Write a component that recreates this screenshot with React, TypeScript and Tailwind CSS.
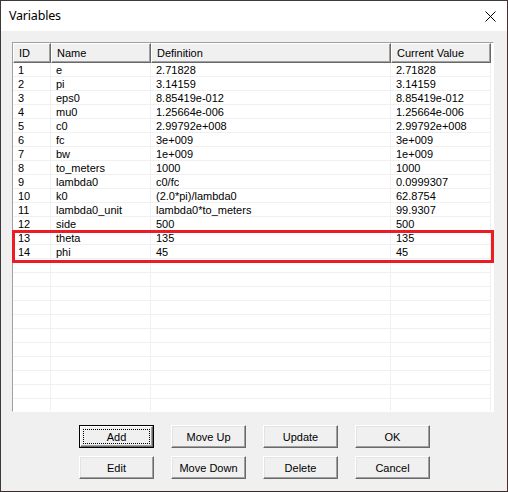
import React from "react";

type Row = [string, string, string, string];

const rows: Row[] = [
  ["1", "e", "2.71828", "2.71828"],
  ["2", "pi", "3.14159", "3.14159"],
  ["3", "eps0", "8.85419e-012", "8.85419e-012"],
  ["4", "mu0", "1.25664e-006", "1.25664e-006"],
  ["5", "c0", "2.99792e+008", "2.99792e+008"],
  ["6", "fc", "3e+009", "3e+009"],
  ["7", "bw", "1e+009", "1e+009"],
  ["8", "to_meters", "1000", "1000"],
  ["9", "lambda0", "c0/fc", "0.0999307"],
  ["10", "k0", "(2.0*pi)/lambda0", "62.8754"],
  ["11", "lambda0_unit", "lambda0*to_meters", "99.9307"],
  ["12", "side", "500", "500"],
  ["13", "theta", "135", "135"],
  ["14", "phi", "45", "45"],
];

const TOTAL_ROWS = 25;
const widths = ["w-[38px]", "w-[100px]", "w-[240px]", "w-[100px]"];
const headers = ["ID", "Name", "Definition", "Current Value"];

function HeaderCell({ label, w }: { label: string; w: string }) {
  return (
    <div
      className={`${w} h-[20px] shrink-0 flex items-center pl-[5px] pt-[1px] bg-[#f0f0f0] border-t border-l border-t-white border-l-white border-r border-b border-r-[#696969] border-b-[#696969] shadow-[inset_-1px_-1px_#a0a0a0]`}
    >
      {label}
    </div>
  );
}

function Btn({ label, isDefault }: { label: string; isDefault?: boolean }) {
  if (isDefault) {
    return (
      <div className="w-[75px] h-[23px] border border-black">
        <div className="w-full h-full flex items-center justify-center pt-[1px] bg-[#f0f0f0] border-t border-l border-t-white border-l-white border-r border-b border-r-[#696969] border-b-[#696969] shadow-[inset_-1px_-1px_#a0a0a0] relative">
          <div className="absolute inset-[2px] border border-dotted border-black" />
          {label}
        </div>
      </div>
    );
  }
  return (
    <div className="w-[75px] h-[23px] flex items-center justify-center pt-[1px] bg-[#f0f0f0] border-t border-l border-t-white border-l-white border-r border-b border-r-[#696969] border-b-[#696969] shadow-[inset_-1px_-1px_#a0a0a0,inset_1px_1px_#e3e3e3]">
      {label}
    </div>
  );
}

export default function App() {
  const allRows: Row[] = Array.from({ length: TOTAL_ROWS }, (_, i) => rows[i] ?? ["", "", "", ""]);

  return (
    <div className="w-[508px] h-[492px] relative flex flex-col bg-[#f0f0f0] border border-l-[#3a3a3a] border-t-[#3a3a3a] border-r-[#4f2b2b] border-b-[#3a2c2c] font-['Liberation_Sans',Arial,sans-serif] text-[11px] text-black overflow-hidden">
      {/* title bar */}
      <div className="h-[30px] shrink-0 bg-white flex items-center justify-between pl-[8px] pr-[11px]">
        <span className="text-[12.5px] font-['Noto_Sans',sans-serif] tracking-[-0.2px]">Variables</span>
        <svg width="11" height="11" viewBox="0 0 11 11">
          <path d="M0.5 0.5 L10.5 10.5 M10.5 0.5 L0.5 10.5" stroke="#000" strokeWidth="1" />
        </svg>
      </div>

      {/* list */}
      <div className="ml-[11px] mt-[11px] w-[482px] h-[370px] border border-t-[#a0a0a0] border-l-[#a0a0a0] border-r-white border-b-white bg-white overflow-hidden">
        <div className="flex">
          {headers.map((h, i) => (
            <HeaderCell key={h} label={h} w={widths[i]} />
          ))}
        </div>
        {allRows.map((r, ri) => (
          <div key={ri} className="flex h-[14px]">
            {r.map((c, ci) => (
              <div
                key={ci}
                className={`${widths[ci]} shrink-0 h-[14px] pl-[5px] pt-[1px] leading-[13px] border-r border-b border-[#f0f0f0] whitespace-nowrap overflow-hidden`}
              >
                {c}
              </div>
            ))}
          </div>
        ))}
      </div>

      {/* highlight */}
      <div className="absolute left-[11px] top-[229px] w-[482px] h-[33px] border-[3px] border-[#ed1c24]" />

      {/* buttons */}
      <div className="ml-[78px] mt-[13px] grid grid-cols-[75px_75px_75px_75px] gap-x-[17px] gap-y-[8px]">
        <Btn label="Add" isDefault />
        <Btn label="Move Up" />
        <Btn label="Update" />
        <Btn label="OK" />
        <Btn label="Edit" />
        <Btn label="Move Down" />
        <Btn label="Delete" />
        <Btn label="Cancel" />
      </div>
    </div>
  );
}
